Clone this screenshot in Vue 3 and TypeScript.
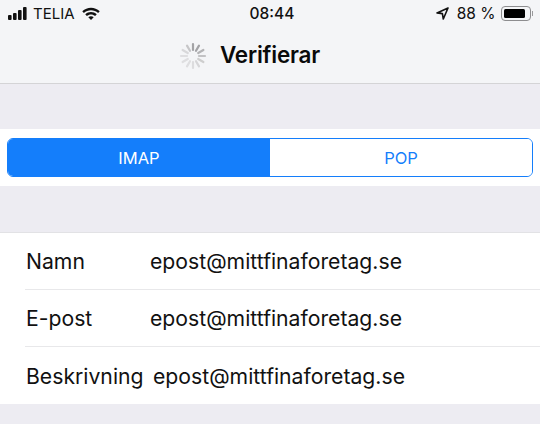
<template>
  <div class="screen">
    <header class="top">
      <div class="status">
        <div class="status-left">
          <svg class="signal" width="22" height="14" viewBox="0 0 22 14" aria-hidden="true">
            <rect v-for="b in bars" :key="b.x" :x="b.x" :y="13 - b.h" width="3.6" :height="b.h" rx="1" />
          </svg>
          <span class="carrier">TELIA</span>
          <svg class="wifi" width="18" height="13" viewBox="0 0 20 14" aria-hidden="true">
            <path d="M0.3 4.6C5.6 -0.6 14.4 -0.6 19.7 4.6L17.9 6.5C13.5 2.3 6.5 2.3 2.1 6.5Z" />
            <path d="M3.6 7.9C7.2 4.5 12.8 4.5 16.4 7.9L14.6 9.7C12 7.4 8 7.4 5.4 9.7Z" />
            <path d="M7 11.2C8.7 9.8 11.3 9.8 13 11.2L10 14.2Z" />
          </svg>
        </div>
        <span class="clock">08:44</span>
        <div class="status-right">
          <svg class="arrow" width="13" height="13" viewBox="0 0 13 13" aria-hidden="true">
            <path d="M12 1L1 5.9L6.4 6.6L7.3 12Z" fill="none" stroke="#111" stroke-width="1.6" stroke-linejoin="round" />
          </svg>
          <span class="percent">88 %</span>
          <div class="battery"><i></i></div>
          <b class="nub"></b>
        </div>
      </div>
      <div class="nav">
        <svg class="spinner" width="28" height="28" viewBox="0 0 28 28" aria-hidden="true">
          <line
            v-for="s in spokes"
            :key="s.angle"
            x1="14" y1="2" x2="14" y2="8"
            stroke-width="2.2"
            stroke-linecap="round"
            :stroke="s.color"
            :transform="`rotate(${s.angle} 14 14)`"
          />
        </svg>
        <h1>Verifierar</h1>
      </div>
    </header>

    <section class="band seg-band">
      <div class="segments">
        <button class="seg on">IMAP</button>
        <button class="seg">POP</button>
      </div>
    </section>

    <section class="band list">
      <div v-for="r in rows" :key="r.label" class="row">
        <span class="label" :class="{ wide: r.label === 'Beskrivning' }">{{ r.label }}</span>
        <span class="value">{{ r.value }}</span>
      </div>
    </section>
  </div>
</template>

<script setup lang="ts">
const bars = [
  { x: 0, h: 5 },
  { x: 5, h: 7 },
  { x: 10, h: 10 },
  { x: 15, h: 13 }
];

const shades = ['#a3a3a6', '#a3a3a6', '#b4b4b6', '#c2c2c4', '#cecece', '#d6d6d8', '#dcdcde', '#dedee0', '#dedee0', '#dedee0', '#d8d8da', '#c6c6c8'];
const spokes = shades.map((color, i) => ({ angle: i * 30, color }));

const rows = [
  { label: 'Namn', value: 'epost@mittfinaforetag.se' },
  { label: 'E-post', value: 'epost@mittfinaforetag.se' },
  { label: 'Beskrivning', value: 'epost@mittfinaforetag.se' }
];
</script>

<style>
html, body { margin: 0; background: #edecf2; }
</style>

<style scoped>
.screen {
  width: 540px;
  height: 424px;
  overflow: hidden;
  background: #edecf2;
  color: #111;
  font-family: Inter, "Liberation Sans", sans-serif;
}

.top {
  height: 83px;
  background: #f4f5f7;
  border-bottom: 1px solid #d4d4d6;
}

.status {
  display: grid;
  grid-template-columns: 1fr auto 1fr;
  align-items: center;
  height: 27px;
  padding: 0 7px 0 8px;
}

.status-left, .status-right {
  display: flex;
  align-items: center;
}

.status-right { justify-content: flex-end; }

.signal { fill: #111; margin-right: 3px; }

.carrier {
  font-size: 15px;
  margin-right: 7px;
}

.wifi { fill: #111; }

.clock {
  font-size: 15.5px;
  font-weight: 500;
  margin-left: 3px;
}

.arrow { margin-right: 8px; }

.percent {
  font-size: 15.5px;
  margin-right: 5px;
}

.battery {
  box-sizing: border-box;
  width: 30px;
  height: 15px;
  padding: 2px;
  border: 1px solid #8d8d8f;
  border-radius: 4px;
}

.battery i {
  display: block;
  width: 90%;
  height: 100%;
  border-radius: 1.5px;
  background: #000;
}

.nub {
  width: 1.5px;
  height: 5px;
  margin-left: 1px;
  background: #9a9a9c;
}

.nav {
  display: flex;
  align-items: center;
  justify-content: center;
  gap: 13px;
  height: 55px;
  padding-right: 41px;
}

.spinner { flex: none; margin-top: 2px; }

h1 {
  margin: 0;
  color: #0a0a0a;
  font-size: 22.5px;
  font-weight: 600;
  letter-spacing: -0.2px;
}

.band { background: #fff; }

.seg-band {
  margin-top: 45px;
  height: 57px;
  box-sizing: border-box;
  padding: 9px 7px;
}

.segments {
  display: grid;
  grid-template-columns: 262px 1fr;
  height: 39px;
  box-sizing: border-box;
  border: 1.5px solid #147efb;
  border-radius: 6px;
  overflow: hidden;
}

.seg {
  padding: 0;
  border: 0;
  background: #fff;
  color: #147efb;
  font: 400 16.5px Inter, "Liberation Sans", sans-serif;
}

.seg.on {
  background: #147efb;
  color: #fff;
}

.list {
  margin-top: 46px;
  padding-left: 25px;
  border-top: 1px solid #e2e2e5;
}

.row {
  display: flex;
  align-items: center;
  height: 57px;
  font-size: 21.2px;
  border-bottom: 1px solid #e8e8ea;
  box-sizing: border-box;
}

.row:last-child { border-bottom: 0; }

.label { width: 124px; margin-left: 1px; flex: none; }
.label.wide { width: 127px; }

.value { white-space: nowrap; }
</style>
